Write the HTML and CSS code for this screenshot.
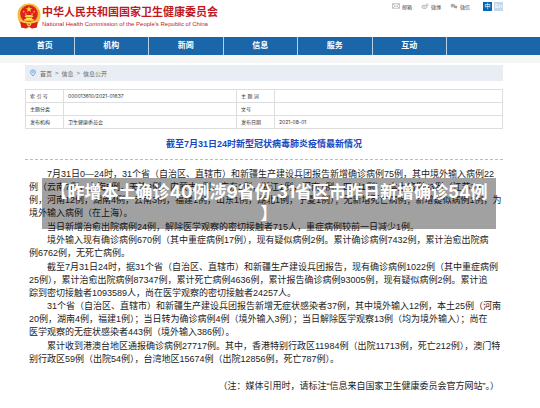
FILE: index.html
```html
<!DOCTYPE html>
<html lang="zh-CN">
<head>
<meta charset="utf-8">
<title>中华人民共和国国家卫生健康委员会</title>
<link rel="stylesheet" href="styles.css">
</head>
<body>
<header class="top">
  <svg class="emblem" viewBox="0 0 46 50" aria-hidden="true">
    <path d="M23 1C10 1 1 10 1 23c0 8 3 14 6 17l1 7 10 2 5-2 5 2 10-2 1-7c3-3 6-9 6-17C45 10 36 1 23 1z" fill="#f0bd3c"/>
    <circle cx="23" cy="21" r="17" fill="#e0221c"/>
    <path d="M6 36c8 2 12 3 17 6 5-3 9-4 17-6l-2 11-9 2-6-4-6 4-9-2z" fill="#d8251c"/>
    <path d="M23 6l1.5 4.300h4.500l-3.600 2.700 1.400 4.300-3.800-2.600-3.800 2.600 1.400-4.300-3.600-2.700h4.500z" fill="#ffd84a"/>
    <g fill="#ffd84a"><circle cx="13" cy="17" r="1.500"/><circle cx="17" cy="21" r="1.500"/><circle cx="29" cy="21" r="1.500"/><circle cx="33" cy="17" r="1.500"/><path d="M15 25l3-2h10l3 2v2H15zM17 28h12v3h3v3H14v-3h3z"/></g>
    <path d="M8 34q15 7 30 0" fill="none" stroke="#f6cb45" stroke-width="3"/>
    <circle cx="23" cy="41" r="4" fill="#f6cb45"/><circle cx="23" cy="41" r="1.500" fill="#d8251c"/>
  </svg>
  <div class="brand">
    <div class="brand-cn">中华人民共和国国家卫生健康委员会</div>
    <div class="brand-en">National Health Commission of the People's Republic of China</div>
  </div>
  <div class="tools">
    <a href="#"><svg viewBox="0 0 14 10" aria-hidden="true"><path d="M1 1h12v8H1zM1 1l6 5 6-5M1 9l4-4M13 9L9 5" fill="none" stroke="#999"/></svg>邮箱</a>
    <a href="#"><svg viewBox="0 0 14 10" aria-hidden="true"><ellipse cx="6" cy="6.500" rx="4.500" ry="2.800" fill="none" stroke="#999" stroke-width="1.300"/><circle cx="5.500" cy="6.500" r="1.200" fill="#999"/><path d="M9 1q4 0 3.500 4M9 3q2 0 1.500 2" fill="none" stroke="#999"/></svg>微博</a>
    <a href="#"><svg viewBox="0 0 14 10" aria-hidden="true"><path d="M5 1C2.500 1 1 2.300 1 4c0 1 .5 1.800 1.300 2.300L2 8l1.800-1H5c2.500 0 4-1.300 4-3S7.500 1 5 1z" fill="#aaa"/><path d="M9.500 4C7.500 4 6 5 6 6.500S7.500 9 9.500 9l2.500.7-.4-1.200c.9-.5 1.400-1.200 1.400-2C13 5 11.500 4 9.500 4z" fill="#999" stroke="#fff" stroke-width=".5"/></svg>微信</a>
    <div class="lang"><a class="on" href="#">中</a><a href="#">En</a></div>
  </div>
</header>
<nav class="nav">
  <a href="#">首页</a><a href="#">机构</a><a href="#">新闻</a><a href="#">信息</a><a href="#">服务</a><a href="#">互动</a>
</nav>
<main class="page">
  <div class="crumbs">
    <svg viewBox="0 0 12 14" aria-hidden="true"><path d="M6 13C3 9.500 1.200 7.500 1.200 5.500a4.800 4.800 0 0 1 9.600 0C10.800 7.500 9 9.500 6 13z" fill="none" stroke="#4a90d9" stroke-width="1.500"/><circle cx="6" cy="5.500" r="1.700" fill="none" stroke="#4a90d9"/></svg>
    <a href="#">首页</a><span>&gt;</span><a href="#">信息</a><span>&gt;</span><a href="#">信息公开</a>
  </div>
  <table class="meta">
    <colgroup><col class="c1"><col class="c2"><col class="c3"><col></colgroup>
    <tr><th>索 引 号</th><td>000013610/2021-01637</td><th>主 题 词</th><td></td></tr>
    <tr><th>主题分类</th><td></td><th>文号</th><td></td></tr>
    <tr><th>发布机构</th><td>卫生健康委员会</td><th>发布日期</th><td>2021-08-01</td></tr>
  </table>
  <h1>截至7月31日24时新型冠状病毒肺炎疫情最新情况</h1>
  <article class="article">
    <p>7月31日0—24时，31个省（自治区、直辖市）和新疆生产建设兵团报告新增确诊病例75例，其中境外输入病例22<br>例（云南7例，上海5例，天津3例，内蒙古2例，广东2例，浙江1例，河南1例，四川1例），本土病例53例（江苏30<br>例，河南12例，湖南4例，云南3例，福建1例，山东1例，湖北1例，宁夏1例）；无新增死亡病例；新增疑似病例1例，为<br>境外输入病例（在上海）。</p>
    <p>当日新增治愈出院病例24例，解除医学观察的密切接触者715人，重症病例较前一日减少1例。</p>
    <p>境外输入现有确诊病例670例（其中重症病例17例），现有疑似病例2例。累计确诊病例7432例，累计治愈出院病<br>例6762例，无死亡病例。</p>
    <p>截至7月31日24时，据31个省（自治区、直辖市）和新疆生产建设兵团报告，现有确诊病例1022例（其中重症病例<br>25例），累计治愈出院病例87347例，累计死亡病例4636例，累计报告确诊病例93005例，现有疑似病例2例。累计追<br>踪到密切接触者1093589人，尚在医学观察的密切接触者24257人。</p>
    <p>31个省（自治区、直辖市）和新疆生产建设兵团报告新增无症状感染者37例，其中境外输入12例，本土25例（河南<br>20例，湖南4例，福建1例）；当日转为确诊病例4例（境外输入3例）；当日解除医学观察13例（均为境外输入）；尚在<br>医学观察的无症状感染者443例（境外输入386例）。</p>
    <p>累计收到港澳台地区通报确诊病例27717例。其中，香港特别行政区11984例（出院11713例，死亡212例），澳门特<br>别行政区59例（出院54例），台湾地区15674例（出院12856例，死亡787例）。</p>
    <div class="note">（注：媒体引用时，请标注“信息来自国家卫生健康委员会官方网站”。）</div>
    <div class="caption">【昨增本土确诊40例涉9省份,31省区市昨日新增确诊54例<br>】</div>
  </article>
</main>
</body>
</html>
```
FILE: styles.css
```css
* { box-sizing: border-box; }
body {
  margin: 0;
  background: #fff;
  color: #222;
  font-family: "Liberation Sans", "Noto Sans CJK SC", sans-serif;
}
a { color: inherit; text-decoration: none; }

.top { display: flex; height: 37px; padding: 3px 37px 0 17px; }
.emblem { width: 24px; height: 26px; }
.brand { padding: 2px 0 0 1px; white-space: nowrap; color: #c01a1f; }
.brand-cn { font-size: 11px; line-height: 15px; font-weight: 700; }
.brand-en { font-size: 6px; line-height: 8px; }
.tools { display: flex; gap: 9px; margin-left: auto; height: 6px; align-items: center; white-space: nowrap; }
.tools > a { display: flex; align-items: center; gap: 2px; font-size: 5px; color: #444; }
.tools svg { width: 8px; height: 6px; }
.lang { display: flex; gap: 2px; margin-left: 4px; font-size: 6px; line-height: 9px; text-align: center; color: #fff; }
.lang a { width: 9px; background: #c2d9ec; }
.lang .on { background: #0068b7; }

.nav { display: flex; height: 18px; background: #1b65a9; }
.nav a {
  flex: 0 0 13.8%;
  border-right: 1px solid #b9cfe4;
  color: #fff;
  font-size: 8px;
  font-weight: 700;
  line-height: 18px;
  text-align: center;
}
.nav a:first-child { padding-left: 16px; }

.page { border-top: 8px solid #f6f6f6; padding: 2px 37px 16px 25px; }
.crumbs {
  display: flex;
  align-items: center;
  gap: 3px;
  height: 16px;
  padding: 0 5px;
  background: #e8eef3;
  color: #666;
  font-size: 6px;
}
.crumbs svg { width: 6px; height: 8px; margin-right: 1px; }

.meta {
  width: 100%;
  margin-top: 8px;
  border-collapse: collapse;
  table-layout: fixed;
  font-family: Inter, "Noto Sans CJK SC", sans-serif;
  font-size: 5px;
  line-height: 12px;
  color: #333;
}
.meta th, .meta td { height: 13px; padding: 0 4px; border: 1px solid #dedede; text-align: left; font-weight: 400; }
.c1 { width: 38px; }
.c2 { width: 173px; }
.c3 { width: 38px; }

h1 {
  margin: 8px 0 0;
  padding-bottom: 8px;
  border-bottom: 1px dashed #bbb;
  color: #1747c4;
  font-size: 9px;
  line-height: 14px;
  text-align: center;
}
.article { position: relative; padding: 8px 0 0 4px; font-size: 9px; line-height: 13px; white-space: nowrap; }
.article p { margin: 0; text-indent: 18px; }
.article p:nth-of-type(even) { margin-top: 1px; }
.note { margin-top: 14px; padding-right: 4px; text-align: right; }
.caption {
  position: absolute;
  top: 18px;
  left: 17px;
  right: 7px;
  padding: 3px 0 4px;
  background: rgba(0, 0, 0, 0.37);
  color: #fff;
  font-family: Inter, "Noto Sans CJK SC", sans-serif;
  font-size: 17px;
  font-weight: 700;
  line-height: 22px;
  text-align: center;
}
```
